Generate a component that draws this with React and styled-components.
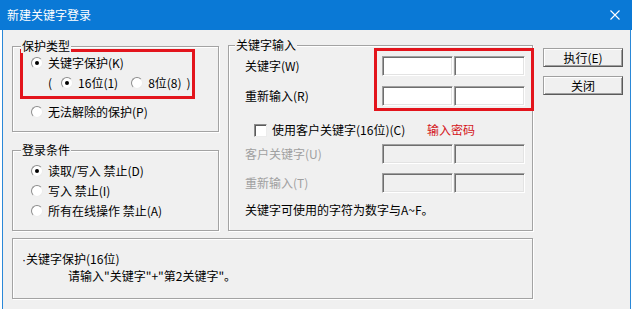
import React from "react";
import styled, { createGlobalStyle } from "styled-components";

const Global = createGlobalStyle`
  html, body { margin: 0; padding: 0; background: #ffffff; }
  body { font-family: "Noto Sans CJK SC", "Noto Sans", sans-serif; font-size: 12px; color: #000; }
  * { box-sizing: border-box; }
`;

const Window = styled.div`
  width: 632px;
  height: 309px;
  display: flex;
  flex-direction: column;
  overflow: hidden;
`;

const TitleBar = styled.div`
  height: 30px;
  flex: none;
  background: #0a79d6;
  color: #fff;
  display: flex;
  align-items: center;
  justify-content: space-between;
  padding: 0 12px 0 7px;
  font-size: 12px;
  line-height: 14px;
`;

const Client = styled.div`
  flex: 1;
  margin: 0 1px 0 2px;
  border-left: 1px solid #2a88d8;
  border-right: 1px solid #2a88d8;
  background: #f0f0f0;
  padding: 15px 0 0 9px;
  display: flex;
  flex-direction: column;
`;

const TopRow = styled.div`
  display: flex;
  align-items: flex-start;
`;

const LeftCol = styled.div`
  width: 207px;
  margin-top: 1px;
  display: flex;
  flex-direction: column;
  gap: 18px;
`;

const Group = styled.section`
  position: relative;
  width: ${p => p.$w}px;
  height: ${p => p.$h}px;
  margin-left: ${p => p.$ml || 0}px;
  border: 1px solid #a3a3a3;
  box-shadow: inset 1px 1px 0 #ffffff, 1px 1px 0 #ffffff;
  padding: ${p => p.$pad || "0"};
  display: flex;
  flex-direction: column;
`;

const GroupTitle = styled.span`
  position: absolute;
  top: -8px;
  left: ${p => p.$left || 7}px;
  padding: 0 1px;
  background: #f0f0f0;
  line-height: 14px;
  white-space: nowrap;
`;

const Highlight = styled.div`
  width: 175px;
  height: 50px;
  margin-left: 7px;
  border: 3px solid #e3141c;
  padding-top: 1px;
  display: flex;
  flex-direction: column;
`;

const Annotation = styled.div`
  position: absolute;
  left: 145px;
  top: 2px;
  width: 160px;
  height: 63px;
  border: 3px solid #e3141c;
  pointer-events: none;
`;

const OptionRow = styled.div`
  height: 20px;
  display: flex;
  align-items: center;
  padding-left: ${p => p.$pl || 0}px;
  margin-top: ${p => p.$mt || 0}px;
  white-space: nowrap;
  line-height: 14px;
`;

const Radio = styled.span`
  width: 12px;
  height: 12px;
  flex: none;
  border-radius: 50%;
  background: #fff;
  border: 1px solid;
  border-color: #8c8c8c #ececec #ececec #8c8c8c;
  display: inline-flex;
  align-items: center;
  justify-content: center;
  margin-right: 5px;
  margin-left: ${p => p.$ml || 0}px;
  &::after {
    content: "";
    width: 4px;
    height: 4px;
    border-radius: 50%;
    background: ${p => (p.$checked ? "#000" : "transparent")};
  }
`;

const Paren = styled.span`
  margin-left: ${p => p.$ml || 0}px;
`;

const MiddleGroupInner = styled.div`
  display: flex;
  flex-direction: column;
  padding-top: 10px;
`;

const FieldRow = styled.div`
  height: 20px;
  margin-top: ${p => p.$mt || 0}px;
  display: flex;
  align-items: center;
  padding-left: 16px;
  white-space: nowrap;
  line-height: 14px;
`;

const FieldLabel = styled.span`
  width: 137px;
  color: ${p => (p.$disabled ? "#a0a0a0" : "#000")};
`;

const Inputs = styled.div`
  display: flex;
  gap: 1px;
`;

const TextBox = styled.div`
  width: 71px;
  height: 20px;
  background: ${p => (p.$disabled ? "#f0f0f0" : "#ffffff")};
  border: 1px solid;
  border-color: #a0a0a0 #ffffff #ffffff #a0a0a0;
  box-shadow: inset 1px 1px 0 #6e6e6e, inset -1px -1px 0 #e3e3e3;
`;

const CheckRow = styled.div`
  height: 20px;
  margin-top: 14px;
  display: flex;
  align-items: center;
  padding-left: 25px;
  white-space: nowrap;
  line-height: 14px;
`;

const CheckBox = styled.span`
  width: 13px;
  height: 13px;
  flex: none;
  background: #fff;
  border: 1px solid;
  border-color: #8c8c8c #ececec #ececec #8c8c8c;
  box-shadow: inset 1px 1px 0 #5a5a5a;
  margin-right: 5px;
`;

const CheckLabel = styled.span`
  width: 155px;
`;

const RedNote = styled.span`
  color: #d4141a;
`;

const NoteRow = styled.div`
  height: 20px;
  margin-top: 7px;
  display: flex;
  align-items: center;
  padding-left: 16px;
  line-height: 14px;
  white-space: nowrap;
`;

const ButtonCol = styled.div`
  margin-left: 10px;
  padding-top: 3px;
  display: flex;
  flex-direction: column;
  gap: 9px;
`;

const Button = styled.button`
  width: 80px;
  height: 19px;
  padding: 0;
  font: inherit;
  font-size: 12px;
  line-height: 14px;
  color: #000;
  background: #f0f0f0;
  border: 1px solid;
  border-color: #a0a0a0 #5a5a5a #5a5a5a #a0a0a0;
  box-shadow: inset 1px 1px 0 #ffffff, inset -1px -1px 0 #a0a0a0;
  display: flex;
  align-items: center;
  justify-content: center;
`;

const InfoBox = styled.div`
  width: 521px;
  height: 61px;
  margin-top: 7px;
  border: 1px solid #a3a3a3;
  box-shadow: inset 1px 1px 0 #ffffff, 1px 1px 0 #ffffff;
  padding: 12px 0 0 9px;
  line-height: 15px;
`;

const InfoLine = styled.div`
  padding-left: ${p => p.$indent || 0}px;
  white-space: nowrap;
`;

const Bullet = styled.span`
  font-family: "Liberation Sans", sans-serif;
  margin-right: 0px;
`;

function CloseIcon() {
  return (
    <svg width="10" height="10" viewBox="0 0 10 10">
      <path d="M0.5 0.5 L9.5 9.5 M9.5 0.5 L0.5 9.5" stroke="#fff" strokeWidth="1.1" fill="none" />
    </svg>
  );
}

export default function App() {
  return (
    <>
      <Global />
      <Window>
        <TitleBar>
          <span>新建关键字登录</span>
          <CloseIcon />
        </TitleBar>
        <Client>
          <TopRow>
            <LeftCol>
              <Group $w={207} $h={86} $pad="2px 0 0 0">
                <GroupTitle $left={8}>保护类型</GroupTitle>
                <Highlight>
                  <OptionRow $pl={8}>
                    <Radio $checked />
                    关键字保护(K)
                  </OptionRow>
                  <OptionRow $pl={25}>
                    <span>(</span>
                    <Radio $checked $ml={9} />
                    16位(1)
                    <Radio $ml={13} />
                    8位(8)
                    <Paren $ml={5}>)</Paren>
                  </OptionRow>
                </Highlight>
                <OptionRow $pl={18} $mt={3}>
                  <Radio />
                  无法解除的保护(P)
                </OptionRow>
              </Group>
              <Group $w={207} $h={81} $pad="10px 0 0 0">
                <GroupTitle $left={8}>登录条件</GroupTitle>
                <OptionRow $pl={18}>
                  <Radio $checked />
                  读取/写入 禁止(D)
                </OptionRow>
                <OptionRow $pl={18}>
                  <Radio />
                  写入 禁止(I)
                </OptionRow>
                <OptionRow $pl={18}>
                  <Radio />
                  所有在线操作 禁止(A)
                </OptionRow>
              </Group>
            </LeftCol>
            <Group $w={305} $h={186} $ml={9}>
              <GroupTitle $left={6}>关键字输入</GroupTitle>
              <MiddleGroupInner>
                <FieldRow>
                  <FieldLabel>关键字(W)</FieldLabel>
                  <Inputs>
                    <TextBox />
                    <TextBox />
                  </Inputs>
                </FieldRow>
                <FieldRow $mt={10}>
                  <FieldLabel>重新输入(R)</FieldLabel>
                  <Inputs>
                    <TextBox />
                    <TextBox />
                  </Inputs>
                </FieldRow>
                <CheckRow>
                  <CheckBox />
                  <CheckLabel>使用客户关键字(16位)(C)</CheckLabel>
                  <RedNote>输入密码</RedNote>
                </CheckRow>
                <FieldRow $mt={4}>
                  <FieldLabel $disabled>客户关键字(U)</FieldLabel>
                  <Inputs>
                    <TextBox $disabled />
                    <TextBox $disabled />
                  </Inputs>
                </FieldRow>
                <FieldRow $mt={9}>
                  <FieldLabel $disabled>重新输入(T)</FieldLabel>
                  <Inputs>
                    <TextBox $disabled />
                    <TextBox $disabled />
                  </Inputs>
                </FieldRow>
                <NoteRow>关键字可使用的字符为数字与A~F。</NoteRow>
              </MiddleGroupInner>
              <Annotation />
            </Group>
            <ButtonCol>
              <Button>执行(E)</Button>
              <Button>关闭</Button>
            </ButtonCol>
          </TopRow>
          <InfoBox>
            <InfoLine><Bullet>·</Bullet>关键字保护(16位)</InfoLine>
            <InfoLine $indent={46}>请输入"关键字"+"第2关键字"。</InfoLine>
          </InfoBox>
        </Client>
      </Window>
    </>
  );
}
